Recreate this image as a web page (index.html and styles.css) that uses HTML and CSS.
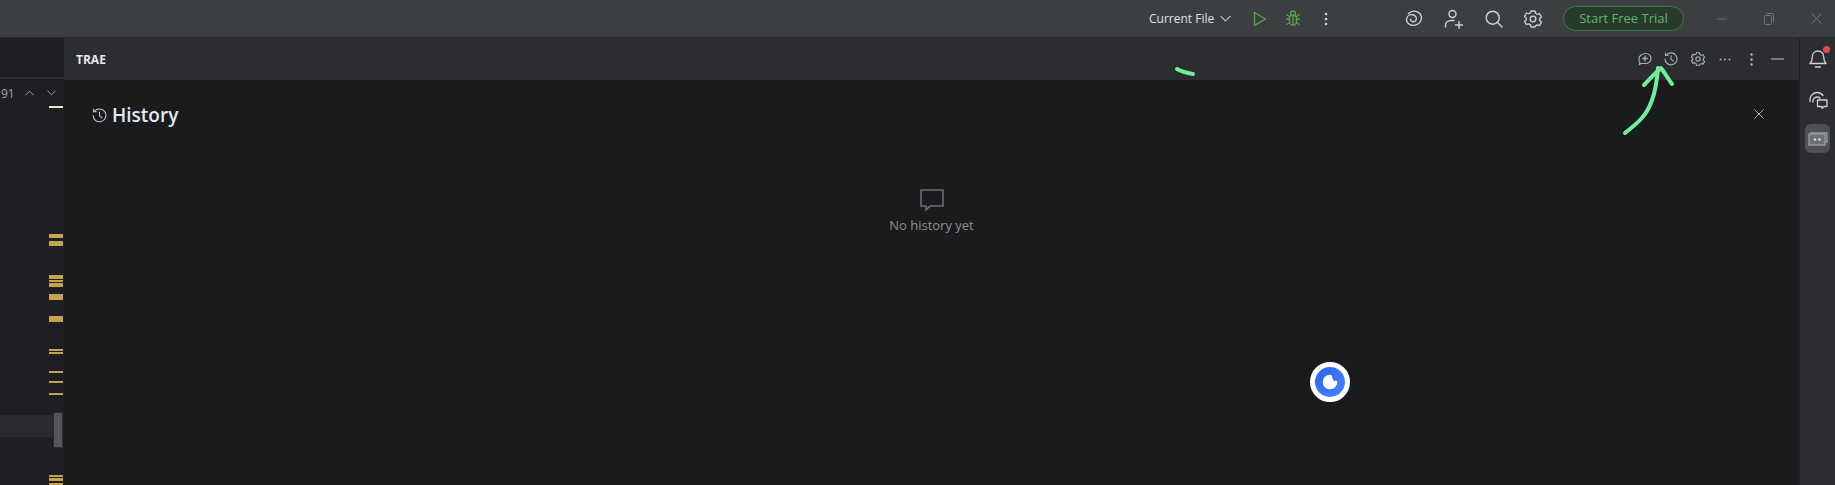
FILE: index.html
```html
<!DOCTYPE html>
<html lang="en">
<head>
    <meta charset="UTF-8">
    <meta name="viewport" content="width=device-width, initial-scale=1.0">
    <title>TRAE History</title>
    <link rel="stylesheet" href="styles.css">
</head>
<body>
    <header class="titlebar">
        <div class="run-group">
            <span class="run-config">Current File</span>
            <svg class="chevron" width="11" height="7" viewBox="0 0 11 7"><path d="M.5 1l5 5 5-5" fill="none" stroke="#b4b8bf" stroke-width="1.1"/></svg>
            <svg class="tb-play" width="14" height="16" viewBox="0 0 14 16"><path d="M1.500 1.500L12.500 8 1.500 14.500z" fill="none" stroke="#57a64a" stroke-width="1.4" stroke-linejoin="round"/></svg>
            <svg class="tb-bug" width="16" height="17" viewBox="0 0 16 17" fill="none" stroke="#57a64a" stroke-width="1.3"><rect x="4.500" y="5" width="7" height="10" rx="3.500"/><path d="M5.500 5V3.500a2.500 2.500 0 0 1 5 0V5M1 9h3.500M11.500 9H15M1.500 4.500l3.500 2.500M14.500 4.500L11 7M1.500 14.500L5 12.500M14.500 14.500L11 12.500M8 5v10"/></svg>
            <svg class="tb-dots" width="4" height="14" viewBox="0 0 4 14" fill="#d2d5da"><circle cx="2" cy="2" r="1.300"/><circle cx="2" cy="7" r="1.300"/><circle cx="2" cy="12" r="1.300"/></svg>
        </div>
        <div class="tool-group">
            <svg width="18" height="17" viewBox="0 0 18 17" fill="none" stroke="#ced0d6" stroke-width="1.4" stroke-linecap="round"><path d="M3.500 3.500C6 1.200 10 .7 13 2.200c3.300 1.700 4.300 5.500 2.700 8.800-1.700 3.400-6 5.200-9.800 4C3 14 1.200 11.300 1.700 8.500 2.200 6 4.800 4.300 7.700 4.800c2.300.4 4 2.300 3.600 4.400-.3 1.700-2 2.900-3.800 2.500-1.300-.3-2.100-1.300-1.900-2.400"/></svg>
            <svg width="20" height="20" viewBox="0 0 20 20" fill="none" stroke="#ced0d6" stroke-width="1.4" stroke-linecap="round"><circle cx="8.500" cy="5" r="3.500"/><path d="M1.500 18v-1.500c0-3 2.500-5 5.500-5h3M15 12.500v7M11.500 16h7"/></svg>
            <svg width="18" height="18" viewBox="0 0 18 18" fill="none" stroke="#ced0d6" stroke-width="1.5" stroke-linecap="round"><circle cx="7.700" cy="7.700" r="6.500"/><path d="M12.500 12.500l4.500 4.500"/></svg>
            <svg width="18" height="18" viewBox="0 0 18 18" fill="none" stroke="#ced0d6" stroke-width="1.3" stroke-linejoin="round"><path d="M7 1h4l.5 2.300 1.700 1 2.300-.7 2 3.400-1.800 1.600v2l1.800 1.600-2 3.400-2.300-.7-1.700 1L11 17H7l-.5-2.100-1.700-1-2.300.7-2-3.400L2.300 10V8L.5 6.400l2-3.400 2.300.7 1.700-1z"/><circle cx="9" cy="9" r="2.800"/></svg>
            <span class="trial-btn">Start Free Trial</span>
        </div>
        <div class="window-btns">
            <svg width="10" height="2" viewBox="0 0 10 2"><path d="M0 1h10" stroke="#6f7277" stroke-width="1"/></svg>
            <svg width="10" height="12" viewBox="0 0 10 12" fill="none" stroke="#6f7277" stroke-width="1"><rect x=".5" y="2.500" width="7" height="9" rx="1"/><path d="M2.500.5h6a1 1 0 0 1 1 1v8"/></svg>
            <svg width="11" height="11" viewBox="0 0 11 11"><path d="M.5.5l10 10M10.500.5l-10 10" stroke="#6f7277" stroke-width="1"/></svg>
        </div>
    </header>

    <div class="workspace">
        <aside class="editor-strip">
            <div class="strip-tabs"></div>
            <div class="find-row">
                <span class="find-count">91</span>
                <svg width="9" height="6" viewBox="0 0 10 6"><path d="M.5 5.500L5 1l4.500 4.500" fill="none" stroke="#9da0a8" stroke-width="1.100"/></svg>
                <svg width="9" height="6" viewBox="0 0 10 6"><path d="M.5.500L5 5 9.500.5" fill="none" stroke="#9da0a8" stroke-width="1.100"/></svg>
            </div>
            <div class="strip-body">
                <div class="caret-line"></div>
                <div class="mark" style="top:130px;height:4px"></div>
                <div class="mark" style="top:137px;height:5px"></div>
                <div class="mark" style="top:171px;height:4px"></div>
                <div class="mark" style="top:176px;height:2px"></div>
                <div class="mark" style="top:179px;height:4px"></div>
                <div class="mark" style="top:190px;height:6px"></div>
                <div class="mark" style="top:212px;height:6px"></div>
                <div class="mark" style="top:245px;height:2px"></div>
                <div class="mark" style="top:248px;height:2px"></div>
                <div class="mark" style="top:267px;height:2px"></div>
                <div class="mark" style="top:277px;height:2px"></div>
                <div class="mark" style="top:289px;height:2px"></div>
                <div class="mark" style="top:371px;height:2px"></div>
                <div class="mark" style="top:374px;height:3px"></div>
                <div class="mark" style="top:379px;height:2px"></div>
                <div class="line-highlight"></div>
                <div class="scroll-thumb"></div>
            </div>
        </aside>

        <main class="panel">
            <div class="panel-head">
                <span class="panel-title">TRAE</span>
                <div class="panel-tools">
                    <svg width="14" height="14" viewBox="0 0 14 14" fill="none" stroke="#aeb1b7" stroke-width="1.100" stroke-linecap="round"><path d="M7.500 1.500c3 0 5.500 2.200 5.500 5s-2.500 5-5.500 5H3l-1.500 1 .3-2.500C1.200 9.300 1 8 1 6.500c0-2.800 3.500-5 6.500-5z"/><path d="M7 4.300v4.400M4.800 6.500h4.400" stroke-width="1.400"/></svg>
                    <svg width="14" height="14" viewBox="0 0 14 14" fill="none" stroke="#aeb1b7" stroke-width="1.100" stroke-linecap="round"><path d="M2.400 3A6 6 0 1 1 1 7M1.500 1v2.500H4M7 3.800v3.400l2.200 2"/></svg>
                    <svg width="14" height="14" viewBox="0 0 18 18" fill="none" stroke="#aeb1b7" stroke-width="1.400" stroke-linejoin="round"><path d="M7 1h4l.5 2.300 1.700 1 2.300-.7 2 3.400-1.800 1.600v2l1.800 1.600-2 3.400-2.300-.7-1.700 1L11 17H7l-.5-2.100-1.700-1-2.300.7-2-3.400L2.300 10V8L.5 6.400l2-3.400 2.300.7 1.700-1z"/><circle cx="9" cy="9" r="2.800"/></svg>
                    <svg width="12" height="3" viewBox="0 0 12 3" fill="#aeb1b7"><circle cx="1.500" cy="1.500" r="1"/><circle cx="6" cy="1.500" r="1"/><circle cx="10.500" cy="1.500" r="1"/></svg>
                    <svg width="3" height="13" viewBox="0 0 3 13" fill="#aeb1b7"><circle cx="1.500" cy="1.500" r="1.200"/><circle cx="1.500" cy="6.500" r="1.200"/><circle cx="1.500" cy="11.500" r="1.200"/></svg>
                    <svg width="13" height="2" viewBox="0 0 13 2"><path d="M0 1h13" stroke="#aeb1b7" stroke-width="1.200"/></svg>
                </div>
            </div>
            <div class="history">
                <div class="history-head">
                    <h2 class="history-title">
                        <svg width="15" height="15" viewBox="0 0 14 14" fill="none" stroke="#c4c7cc" stroke-width="1" stroke-linecap="round"><path d="M2.400 3A6 6 0 1 1 1 7M1.500 1v2.500H4M7 3.800v3.400l2.200 2"/></svg>
                        History
                    </h2>
                    <svg class="history-close" width="10" height="10" viewBox="0 0 10 10"><path d="M.5.500l9 9M9.500.5l-9 9" stroke="#a9acb2" stroke-width="1"/></svg>
                </div>
                <div class="empty-state">
                    <svg width="24" height="22" viewBox="0 0 24 22" fill="none" stroke="#6d7075" stroke-width="1.500"><path d="M1 1h22v16H10l-4 4v-4H1z"/></svg>
                    <p class="empty-text">No history yet</p>
                </div>
            </div>
        </main>

        <aside class="side-rail">
            <button class="rail-btn">
                <svg width="18" height="19" viewBox="0 0 18 19" fill="none" stroke="#ced0d6" stroke-width="1.300" stroke-linecap="round" stroke-linejoin="round"><path d="M1 14.500c1.500-1.500 2.300-3 2.300-6.500 0-3.500 2.200-6 5.700-6s5.700 2.500 5.700 6c0 3.500.8 5 2.300 6.500zM6.500 18h5"/></svg>
                <span class="notify-dot"></span>
            </button>
            <button class="rail-btn">
                <svg width="20" height="18" viewBox="0 0 20 18" fill="none" stroke="#ced0d6" stroke-width="1.300" stroke-linecap="round"><path d="M2 10.500C1 6 4.500 1.500 9 1.500c2.500 0 4.500 1 6 3M5 11c-.5-2.500 1.500-5 4-5 1.200 0 2.300.5 3 1.200"/><path d="M9.500 9h9.500v6.500h-3l-2 2v-2H9.500z" stroke-linejoin="round"/></svg>
            </button>
            <button class="rail-btn rail-btn-active">
                <svg width="20" height="14" viewBox="0 0 20 14" fill="none"><path d="M2 1h17v9h-2" stroke="#96999e" stroke-width="1.400"/><rect x="1" y="2" width="16" height="11" fill="#96999e" fill-opacity=".45" stroke="#96999e" stroke-width="1.400"/><circle cx="7" cy="7.500" r="1.300" fill="#d8dade"/><circle cx="11.500" cy="7.500" r="1.300" fill="#d8dade"/></svg>
            </button>
        </aside>
    </div>

    <svg class="scribble" width="1835" height="485" viewBox="0 0 1835 485" fill="none" stroke="#6fef9a" stroke-width="4" stroke-linecap="round" stroke-linejoin="round">
        <path d="M1177 69c5 3 10 4 16 5"/>
        <path d="M1625 133c14-11 22-18 27-33 4-10 5-20 6-32"/>
        <path d="M1644 85c6-6 11-12 17-17 4 5 7 11 11 16"/>
    </svg>

    <div class="float-logo">
        <svg width="20" height="20" viewBox="0 0 22 22"><path d="M11 3a8 8 0 1 0 8 8c0-1-.8-1.600-1.600-1.300-1.500.4-3-.3-3.400-1.700-.4-1.200-.2-2.300-.8-3.300C13.500 3.800 12.300 3 11 3z" fill="#fff"/></svg>
    </div>
</body>
</html>
```

FILE: styles.css
```css
/* General Reset */
* {
    margin: 0;
    padding: 0;
    box-sizing: border-box;
}

html {
    overflow: hidden;
}

body {
    width: 1835px;
    height: 485px;
    overflow: hidden;
    position: relative;
    background-color: #1a1b1d;
    color: #dfe1e5;
    font-family: "Open Sans", "Noto Sans", sans-serif;
}

/* Title bar */
.titlebar {
    display: flex;
    align-items: center;
    justify-content: flex-end;
    height: 38px;
    background-color: #3c3f41;
    border-bottom: 1px solid #27282b;
}

.run-group {
    display: flex;
    align-items: center;
    margin-right: 77px;
}

.run-config {
    font-size: 12px;
    color: #dfe1e5;
    width: 71px;
    white-space: nowrap;
}

.chevron {
    margin-right: 22px;
}

.tb-play {
    margin-right: 18px;
}

.tb-bug {
    margin-right: 23px;
}

.tool-group {
    display: flex;
    align-items: center;
    gap: 21px;
}

.trial-btn {
    width: 121px;
    height: 25px;
    border: 1.5px solid #3f7a45;
    border-radius: 13px;
    background-color: #273a2b;
    color: #5fb865;
    font-size: 13px;
    line-height: 22px;
    text-align: center;
}

.window-btns {
    display: flex;
    align-items: center;
    gap: 37px;
    margin-left: 33px;
    margin-right: 13px;
}

/* Workspace */
.workspace {
    display: flex;
    height: 447px;
}

.editor-strip {
    width: 64px;
    background-color: #1e1f22;
    display: flex;
    flex-direction: column;
}

.strip-tabs {
    height: 41px;
    border-bottom: 2px solid #2c2e32;
}

.find-row {
    height: 25px;
    display: flex;
    align-items: center;
    gap: 13px;
    padding-top: 3px;
}

.find-count {
    font-size: 12px;
    color: #a9a39a;
    width: 11px;
    margin-left: 1px;
    white-space: nowrap;
}

.strip-body {
    position: relative;
    flex: 1;
}

/* strip-body starts at y=104 */
.caret-line {
    position: absolute;
    left: 49px;
    top: 2px;
    width: 14px;
    height: 2px;
    background-color: #f5e6c4;
}

.mark {
    position: absolute;
    left: 49px;
    width: 14px;
    background-color: #c7a34d;
}

.line-highlight {
    position: absolute;
    left: 0;
    top: 311px;
    width: 54px;
    height: 22px;
    background-color: #2a2b2f;
}

.scroll-thumb {
    position: absolute;
    left: 53px;
    top: 308px;
    width: 10px;
    height: 36px;
    background-color: #555659;
    border: 1px solid #2a2b2e;
}

/* Panel */
.panel {
    flex: 1;
    display: flex;
    flex-direction: column;
    background-color: #1a1b1d;
}

.panel-head {
    height: 42px;
    display: flex;
    align-items: center;
    justify-content: space-between;
    background-color: #2b2d30;
    padding-left: 12px;
    padding-right: 8px;
}

.panel-title {
    font-size: 12px;
    font-weight: 700;
    color: #e6e8ec;
}

.panel-tools {
    display: grid;
    grid-template-columns: repeat(6, 26.6px);
    justify-items: center;
    align-items: center;
}

.history {
    flex: 1;
    padding: 20px 35px 0 28px;
}

.history-head {
    display: flex;
    align-items: center;
    justify-content: space-between;
}

.history-title {
    display: flex;
    align-items: center;
    gap: 5px;
    font-size: 19px;
    font-weight: 600;
    color: #e3e9f0;
    line-height: 30px;
}

.history-close {
    margin-bottom: 2px;
}

.empty-state {
    display: flex;
    flex-direction: column;
    align-items: center;
    margin-top: 59px;
    padding-left: 7px;
    gap: 5px;
}

.empty-text {
    font-size: 13px;
    font-weight: 500;
    color: #8b8e93;
}

/* Right rail */
.side-rail {
    width: 36px;
    background-color: #2b2d30;
    border-left: 1px solid #1e1f22;
    display: flex;
    flex-direction: column;
    align-items: center;
    padding-top: 7px;
    gap: 14px;
}

.rail-btn {
    position: relative;
    width: 25px;
    height: 27px;
    border: none;
    background: none;
    display: flex;
    align-items: center;
    justify-content: center;
}

.rail-btn-active {
    height: 29px;
    margin-top: -3px;
    background-color: #4e5054;
    border-radius: 6px;
}

.notify-dot {
    position: absolute;
    top: 1px;
    right: 0;
    width: 7px;
    height: 7px;
    border-radius: 50%;
    background-color: #e5484d;
}

/* Overlays */
.scribble {
    position: absolute;
    left: 0;
    top: 0;
    pointer-events: none;
}

.float-logo {
    position: absolute;
    left: 1310px;
    top: 362px;
    width: 40px;
    height: 40px;
    border-radius: 50%;
    border: 5px solid #fff;
    background: linear-gradient(135deg, #2a62f0, #4a87ff);
    display: flex;
    align-items: center;
    justify-content: center;
}
```
